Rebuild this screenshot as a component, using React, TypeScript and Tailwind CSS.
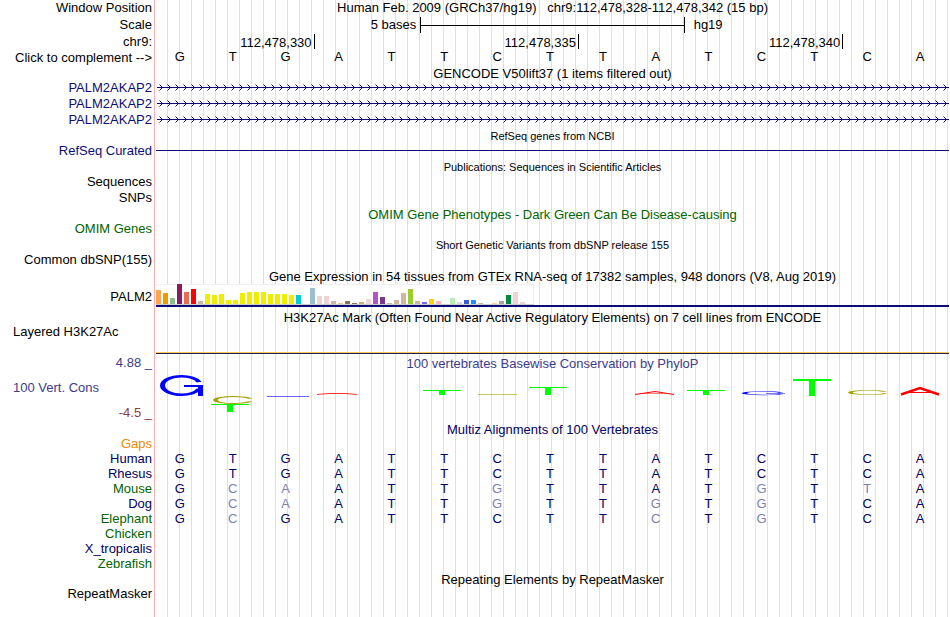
import React from 'react';

type Tone = 'black' | 'navy' | 'gene' | 'green' | 'orange' | 'blue' | 'red';

const toneClasses: Record<Tone, string> = {
  black: 'text-black',
  navy: 'text-[#000064]',
  gene: 'text-[#0c0c78]',
  green: 'text-[#006400]',
  orange: 'text-[#e68a00]',
  blue: 'text-[#3c3c8c]',
  red: 'text-[#8c3c3c]',
};

const BASES = 'GTGATTCTTATCTCA';

const species: Array<{ name: string; tone: Tone; bases?: string }> = [
  { name: 'Gaps', tone: 'orange' },
  { name: 'Human', tone: 'navy', bases: 'GTGATTCTTATCTCA' },
  { name: 'Rhesus', tone: 'navy', bases: 'GTGATTCTTATCTCA' },
  { name: 'Mouse', tone: 'green', bases: 'GCAATTGTTATGTTA' },
  { name: 'Dog', tone: 'navy', bases: 'GCAATTGTTGTGTCA' },
  { name: 'Elephant', tone: 'green', bases: 'GCGATTCTTCTGTCA' },
  { name: 'Chicken', tone: 'green' },
  { name: 'X_tropicalis', tone: 'navy' },
  { name: 'Zebrafish', tone: 'green' },
];

// one entry per GTEx tissue: [colour, bar height]
const tissues: Array<[string, number]> = [
  ['#ffa54f', 14], ['#ee9a00', 11], ['#8fbc8f', 6], ['#8b1c62', 20], ['#ee6a50', 12], ['#ff0000', 15],
  ['#cdb79e', 3], ['#eeee00', 10], ['#eeee00', 9], ['#eeee00', 10], ['#eeee00', 4], ['#eeee00', 4],
  ['#eeee00', 11], ['#eeee00', 12], ['#eeee00', 12], ['#eeee00', 12], ['#eeee00', 10], ['#eeee00', 10],
  ['#eeee00', 10], ['#eeee00', 9], ['#00cdcd', 9], ['#ee82ee', 0], ['#9ac0cd', 16], ['#eed5d2', 8],
  ['#eed5d2', 8], ['#cdb79e', 3], ['#eec591', 1], ['#8b7355', 3], ['#8b7355', 1], ['#cdaa7d', 2],
  ['#eed5d2', 5], ['#b452cd', 12], ['#7a378b', 7], ['#cdb79e', 1], ['#cdb79e', 4], ['#cdb79e', 11],
  ['#9acd32', 15], ['#cdb79e', 3], ['#7a67ee', 2], ['#ffd700', 5], ['#ffb6c1', 3], ['#cd9b1d', 0],
  ['#b4eeb4', 6], ['#d9d9d9', 2], ['#3a5fcd', 4], ['#1e90ff', 4], ['#cdb79e', 1], ['#cdb79e', 0],
  ['#ffd39b', 1], ['#a6a6a6', 3], ['#008b45', 9], ['#eed5d2', 12], ['#eed5d2', 2], ['#ff00ff', 0],
];

interface RowProps {
  label?: string;
  tone?: Tone;
  alignLeft?: boolean;
  children?: React.ReactNode;
}

const Row: React.FC<RowProps> = ({ label, tone = 'black', alignLeft = false, children }) => (
  <div className="grid grid-cols-[154px_1fr] gap-x-[2px]">
    <div
      className={`whitespace-nowrap pr-[2px] ${alignLeft ? 'pl-[13px] text-left' : 'text-right'} ${toneClasses[tone]}`}
    >
      {label}
    </div>
    <div className="min-w-0">{children}</div>
  </div>
);

interface TitleProps {
  children: React.ReactNode;
  tone?: Tone;
  small?: boolean;
}

const TrackTitle: React.FC<TitleProps> = ({ children, tone = 'black', small = false }) => (
  <Row>
    <h2
      className={`h-[15px] whitespace-pre text-center ${
        small ? 'text-[11px] leading-4' : 'text-[13px] leading-[18px]'
      } ${toneClasses[tone]}`}
    >
      {children}
    </h2>
  </Row>
);

const BaseRow: React.FC<{ bases: string; tone: Tone }> = ({ bases, tone }) => (
  <div className="grid grid-cols-15">
    {bases.split('').map((base, i) => (
      <span
        key={i}
        className={`pr-[5px] text-center ${
          tone === 'navy' && base !== BASES[i] ? 'text-[#8080b0]' : toneClasses[tone]
        }`}
      >
        {base}
      </span>
    ))}
  </div>
);

const GeneLine: React.FC<{ id: string }> = ({ id }) => (
  <svg className="block h-4 w-full" aria-hidden="true">
    <defs>
      <pattern id={id} width="8" height="16" patternUnits="userSpaceOnUse">
        <path d="M3.5 4.5l3 3l-3 3" fill="none" stroke="#0c0c78" strokeWidth="1" />
      </pattern>
    </defs>
    <rect width="100%" height="16" fill={`url(#${id})`} />
    <rect x="1" y="7" width="100%" height="1" fill="#0c0c78" />
  </svg>
);

const ExpressionChart = () => (
  <svg width="378" height="21" className="block" role="img" aria-label="Expression by tissue">
    <rect width="378" height="21" fill="#ffffff" />
    <rect width="378" height="1" fill="#f0f0f0" />
    <rect x="377" width="1" height="21" fill="#f0f0f0" />
    <rect y="20" width="378" height="1" fill="#cccccc" />
    {tissues.map(([fill, height], i) => (
      <rect key={i} x={i * 7} y={20 - height} width="5" height={height} fill={fill} />
    ))}
  </svg>
);

const TMark: React.FC<{ x: number; y: number; bar: number; h: number }> = ({ x, y, bar, h }) => (
  <g fill="#00ff00">
    <rect x={x} y={y} width="38" height={bar} />
    <rect x={x + 16} y={y} width="6" height={h} />
  </g>
);

// open ring, w and h are its outer size
const RingMark: React.FC<{ cx: number; cy: number; w: number; h: number; color: string }> = ({
  cx,
  cy,
  w,
  h,
  color,
}) => (
  <circle
    r="9"
    fill="none"
    stroke={color}
    strokeWidth="2.4"
    pathLength="100"
    strokeDasharray="88 12"
    strokeDashoffset="-6"
    transform={`translate(${cx} ${cy}) scale(${w / 20.4} ${h / 20.4})`}
  />
);

const ConservationChart = () => (
  <svg
    viewBox="0 0 793 50"
    preserveAspectRatio="none"
    className="block h-[50px] w-full"
    role="img"
    aria-label="Basewise conservation scores"
  >
    <RingMark cx={25.5} cy={15.5} w={43} h={21} color="#0000ff" />
    <RingMark cx={77.5} cy={30} w={41} h={8} color="#a0a000" />
    <RingMark cx={607.5} cy={23.2} w={43} h={4} color="#0000ff" />
    <RingMark cx={712.5} cy={22.5} w={41} h={5} color="#a0a000" />
    <g fill="#0000ff">
      <rect x="28" y="15" width="19" height="2" />
      <rect x="42" y="15" width="5" height="11" />
      <rect x="111" y="26" width="42" height="1" fillOpacity="0.6" />
      <rect x="610" y="23" width="19" height="1" fillOpacity="0.5" />
    </g>
    <rect x="322" y="24" width="39" height="1" fill="#a0a000" fillOpacity="0.6" />
    <g fill="none" stroke="#ff0000">
      <polyline points="161,24.5 173,23.5 190,23.5 201,24.5" strokeWidth="1" strokeOpacity="0.8" />
      <polyline points="479,24.5 499,21.5 518,24.5" strokeWidth="1.2" />
      <line x1="488" y1="23.5" x2="509" y2="23.5" strokeWidth="1" strokeOpacity="0.5" />
      <polyline points="745,24.5 764,18 783,24.5" strokeWidth="2.4" />
      <line x1="751" y1="22.5" x2="777" y2="22.5" strokeWidth="1" />
    </g>
    <TMark x={55} y={34} bar={1} h={8} />
    <TMark x={267} y={20} bar={1} h={5} />
    <TMark x={373} y={17} bar={1} h={8} />
    <TMark x={531} y={20} bar={1} h={5} />
    <TMark x={637} y={9} bar={2} h={17} />
  </svg>
);

const App = () => {
  return (
    <main className="min-h-screen bg-white bg-[linear-gradient(to_right,#ffffff_0_154px,#ffb0b0_154px_155px,#ffffff_155px_156px,transparent_156px),repeating-linear-gradient(to_right,transparent_0_11px,#dcdcf8_11px_12px)] pr-px font-['Liberation_Sans',Arial,sans-serif] text-[13px] leading-4 text-black">
      <Row label="Window Position">
        <h1 className="h-[17px] whitespace-pre text-center">
          {'Human Feb. 2009 (GRCh37/hg19)   chr9:112,478,328-112,478,342 (15 bp)'}
        </h1>
      </Row>
      <Row label="Scale">
        <div className="grid h-[17px] grid-cols-15">
          <span className="col-span-5 pr-1 text-right">5 bases</span>
          <span className="col-span-5 flex h-4 items-center border-x border-black">
            <span className="h-px w-full bg-black" />
          </span>
          <span className="col-span-5 pl-[9px]">hg19</span>
        </div>
      </Row>
      <Row label="chr9:">
        <div className="grid h-[15px] grid-cols-15 text-right leading-[18px]">
          <span className="col-span-3 h-[15px] border-r border-black pr-[2px]">112,478,330</span>
          <span className="col-span-5 h-[15px] border-r border-black pr-[2px]">112,478,335</span>
          <span className="col-span-5 h-[15px] border-r border-black pr-[2px]">112,478,340</span>
        </div>
      </Row>
      <div className="leading-[15px]">
        <Row label="Click to complement -->">
          <div className="leading-[13px]">
            <BaseRow bases={BASES} tone="black" />
          </div>
        </Row>
      </div>

      <TrackTitle>GENCODE V50lift37 (1 items filtered out)</TrackTitle>
      {['gene-a', 'gene-b', 'gene-c'].map((id) => (
        <Row key={id} label="PALM2AKAP2" tone="gene">
          <GeneLine id={id} />
        </Row>
      ))}

      <TrackTitle small>RefSeq genes from NCBI</TrackTitle>
      <Row label="RefSeq Curated" tone="gene">
        <div className="h-2 border-b border-[#0c0c78]" />
      </Row>

      <TrackTitle small>Publications: Sequences in Scientific Articles</TrackTitle>
      <Row label="Sequences" />
      <Row label="SNPs" />

      <TrackTitle tone="green">OMIM Gene Phenotypes - Dark Green Can Be Disease-causing</TrackTitle>
      <Row label="OMIM Genes" tone="green" />

      <TrackTitle small>Short Genetic Variants from dbSNP release 155</TrackTitle>
      <Row label="Common dbSNP(155)" />

      <TrackTitle>Gene Expression in 54 tissues from GTEx RNA-seq of 17382 samples, 948 donors (V8, Aug 2019)</TrackTitle>
      <div className="grid grid-cols-[154px_1fr] items-center gap-x-[2px] pb-px">
        <div className="pt-[3px] pr-[2px] text-right">PALM2</div>
        <div className="border-b-2 border-[#0c0c78] pt-px">
          <ExpressionChart />
        </div>
      </div>

      <div className="pt-px">
        <TrackTitle>H3K27Ac Mark (Often Found Near Active Regulatory Elements) on 7 cell lines from ENCODE</TrackTitle>
      </div>
      <Row label="Layered H3K27Ac" alignLeft />
      <Row>
        <div className="h-[14px] border-b border-[#202040]">
          <div className="h-[13px] border-b border-[#ffc864]" />
        </div>
      </Row>

      <div className="grid grid-cols-[154px_1fr] gap-x-[2px] pt-px">
        <div className="flex flex-col justify-between pr-[2px] text-right">
          <span className={toneClasses.blue}>4.88 _</span>
          <span className={`pl-[13px] text-left ${toneClasses.blue}`}>100 Vert. Cons</span>
          <span className={toneClasses.red}>-4.5 _</span>
        </div>
        <div className="pb-px">
          <h2 className={`h-[15px] text-center leading-[18px] ${toneClasses.blue}`}>
            100 vertebrates Basewise Conservation by PhyloP
          </h2>
          <ConservationChart />
        </div>
      </div>

      <TrackTitle tone="navy">Multiz Alignments of 100 Vertebrates</TrackTitle>
      <div className="leading-[15px]">
        {species.map(({ name, tone, bases }) => (
          <Row key={name} label={name} tone={tone}>
            {bases && <BaseRow bases={bases} tone="navy" />}
          </Row>
        ))}
      </div>

      <TrackTitle>Repeating Elements by RepeatMasker</TrackTitle>
      <Row label="RepeatMasker" />
    </main>
  );
};

export default App;
